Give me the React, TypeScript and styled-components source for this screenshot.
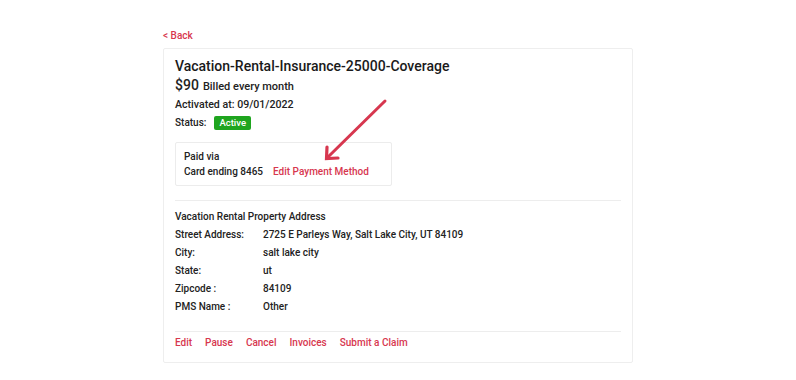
import React from 'react'
import styled, { createGlobalStyle } from 'styled-components'

const Global = createGlobalStyle`
  body {
    margin: 0;
    background: #fff;
    font-family: Roboto, 'Liberation Sans', sans-serif;
    color: #222;
  }
`

type Row = { label: string; value: string }

const rows: Row[] = [
  { label: 'Street Address:', value: '2725 E Parleys Way, Salt Lake City, UT 84109' },
  { label: 'City:', value: 'salt lake city' },
  { label: 'State:', value: 'ut' },
  { label: 'Zipcode :', value: '84109' },
  { label: 'PMS Name :', value: 'Other' },
]

const actions = ['Edit', 'Pause', 'Cancel', 'Invoices', 'Submit a Claim']

const Page = styled.div`
  width: 470px;
  margin: 0 auto;
  padding-top: 29px;
  position: relative;
`

const BackLink = styled.a`
  display: block;
  color: #d7374f;
  font-size: 10px;
  font-weight: 500;
  height: 19px;
  line-height: 14px;
`

const Card = styled.div`
  border: 1px solid #eeeeee;
  border-radius: 2px;
  padding: 8px 11px 10px 11px;
`

const Title = styled.h1`
  margin: 0;
  font-size: 14px;
  font-weight: 500;
  line-height: 19px;
  color: #1a1a1a;
`

const Price = styled.div`
  display: flex;
  align-items: baseline;
  gap: 4px;
  line-height: 18px;
`

const Amount = styled.span`
  font-size: 14px;
  font-weight: 500;
`

const Billed = styled.span`
  font-size: 11px;
  font-weight: 500;
`

const Line = styled.div<{ $size?: number }>`
  font-size: ${(p) => p.$size ?? 10}px;
  font-weight: 500;
  line-height: 18px;
  display: flex;
  align-items: center;
  gap: 8px;
`

const Badge = styled.span`
  background: #1fa51f;
  color: #fff;
  border-radius: 2px;
  padding: 0 5px;
  font-size: 9.5px;
  font-weight: 500;
  line-height: 14px;
`

const PaidBox = styled.div`
  margin-top: 10px;
  width: 217px;
  box-sizing: border-box;
  border: 1px solid #ececec;
  border-radius: 2px;
  padding: 6px 8px;
  font-size: 10px;
  font-weight: 500;
  line-height: 15px;
`

const CardLine = styled.div`
  display: flex;
  gap: 10px;
`

const RedLink = styled.a`
  color: #d7374f;
  font-weight: 500;
`

const Divider = styled.hr<{ $above: number; $below: number }>`
  border: none;
  border-top: 1px solid #ededed;
  margin: ${(p) => p.$above}px 0 ${(p) => p.$below}px;
`

const SectionTitle = styled.div`
  font-size: 10px;
  font-weight: 500;
  line-height: 18px;
`

const Grid = styled.div`
  display: grid;
  grid-template-columns: 88px 1fr;
  font-size: 10px;
  font-weight: 500;
  line-height: 18px;
`

const Actions = styled.div`
  display: flex;
  gap: 13px;
  font-size: 10px;
  line-height: 18px;
`

const Arrow = styled.svg`
  position: absolute;
  left: 0;
  top: 0;
  pointer-events: none;
`

export default function App() {
  return (
    <>
      <Global />
      <Page>
        <BackLink>&lt; Back</BackLink>
        <Card>
          <Title>Vacation-Rental-Insurance-25000-Coverage</Title>
          <Price>
            <Amount>$90</Amount>
            <Billed>Billed every month</Billed>
          </Price>
          <Line $size={10.6}>Activated at: 09/01/2022</Line>
          <Line>
            Status: <Badge>Active</Badge>
          </Line>
          <PaidBox>
            <div>Paid via</div>
            <CardLine>
              <span>Card ending 8465</span>
              <RedLink>Edit Payment Method</RedLink>
            </CardLine>
          </PaidBox>
          <Divider $above={14} $below={7} />
          <SectionTitle>Vacation Rental Property Address</SectionTitle>
          <Grid>
            {rows.map((r) => (
              <React.Fragment key={r.label}>
                <span>{r.label}</span>
                <span>{r.value}</span>
              </React.Fragment>
            ))}
          </Grid>
          <Divider $above={15} $below={2} />
          <Actions>
            {actions.map((a) => (
              <RedLink key={a}>{a}</RedLink>
            ))}
          </Actions>
        </Card>
        <Arrow width="470" height="200" viewBox="163 0 470 200">
          <line x1="385" y1="101" x2="329" y2="156" stroke="#d7374f" strokeWidth="3" strokeLinecap="round" />
          <polyline points="327,147 326.5,158.5 338,158" fill="none" stroke="#d7374f" strokeWidth="3.2" strokeLinecap="round" strokeLinejoin="miter" />
        </Arrow>
      </Page>
    </>
  )
}
